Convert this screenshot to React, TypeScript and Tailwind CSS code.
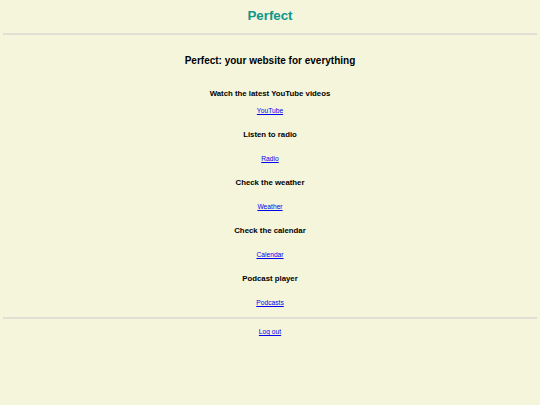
const sections = [
  { title: 'Watch the latest YouTube videos', label: 'YouTube', href: '#youtube' },
  { title: 'Listen to radio', label: 'Radio', href: '#radio' },
  { title: 'Check the weather', label: 'Weather', href: '#weather' },
  { title: 'Check the calendar', label: 'Calendar', href: '#calendar' },
  { title: 'Podcast player', label: 'Podcasts', href: '#podcasts' },
];

export default function App() {
  return (
    <div className="min-h-screen bg-[#f5f5dc] px-[3px] text-center text-black font-['Liberation_Sans',Arial,sans-serif]">
      {/* Header */}
      <h1 className="text-[13.3px] font-bold leading-[32px] text-[#0f968a]">Perfect</h1>
      <hr className="mt-[1px] border-0 border-t-2 border-[#dfdfd3]" />

      <main>
        <h2 className="mt-[16px] text-[10px] font-bold leading-[20px]">
          Perfect: your website for everything
        </h2>

        <div className="mt-[17px]">
          {sections.map((s, i) => (
            <section key={s.href} className={i === 0 ? '' : 'mt-[12px]'}>
              <h3 className="text-[7.8px] font-bold leading-[12px]">{s.title}</h3>
              <p className={`${i === 0 ? 'mt-[5px]' : 'mt-[12px]'} text-[6.7px] leading-[12px]`}>
                <a href={s.href} className="text-[#0000ee] underline">
                  {s.label}
                </a>
              </p>
            </section>
          ))}
        </div>
      </main>

      <hr className="mt-[8px] border-0 border-t-2 border-[#dfdfd3]" />
      <footer className="mt-[7px] text-[6.7px] leading-[12px]">
        <a href="#logout" className="text-[#0000ee] underline">
          Log out
        </a>
      </footer>
    </div>
  );
}
